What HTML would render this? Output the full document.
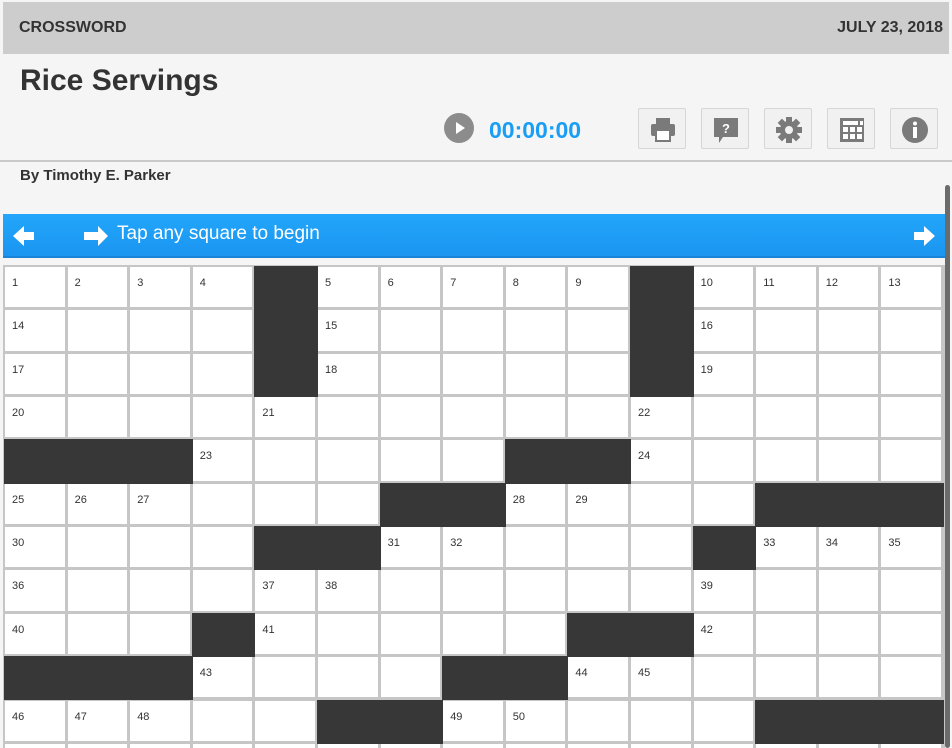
<!DOCTYPE html>
<html><head><meta charset="utf-8"><style>
*{margin:0;padding:0;box-sizing:border-box}
html,body{width:952px;height:748px;overflow:hidden}
body{background:#f5f5f5;font-family:"Liberation Sans",Arial,sans-serif;position:relative}
.hdr{position:absolute;left:3px;top:2px;width:946px;height:52px;background:#cdcdcd;color:#333;font-weight:bold;font-size:16px}
.hdr .l{position:absolute;left:16px;top:17px}
.hdr .r{position:absolute;right:6px;top:17px}
h1{position:absolute;left:20px;top:64px;font-size:30px;color:#333}
.by{position:absolute;left:20px;top:167px;font-size:15px;font-weight:bold;color:#333}
.hr{position:absolute;left:0;top:160px;width:952px;height:2px;background:#c9c9c9}
.play{position:absolute;left:444px;top:113px;width:30px;height:30px;border-radius:50%;background:#8c8c8c}
.play:after{content:"";position:absolute;left:12px;top:9px;border-left:9px solid #fff;border-top:6px solid transparent;border-bottom:6px solid transparent}
.time{position:absolute;left:489px;top:117px;font-size:23px;font-weight:bold;color:#1a9ef5}
.btn{position:absolute;top:108px;width:48px;height:41px;background:#f1f1f1;border:1px solid #d6d6d6;border-radius:2px}
.btn svg{position:absolute;left:9px;top:6px}
.bar{position:absolute;left:3px;top:214px;width:942px;height:44px;background:linear-gradient(#22a6fb,#1b95f0);border-bottom:2px solid #1a85d8}
.bar .t{position:absolute;left:114px;top:9px;color:#fff;font-size:19px}
.sb{position:absolute;left:945px;top:185px;width:5px;height:563px;background:#6b6b6b;border-radius:3px}
.grid{position:absolute;left:3px;top:265px;width:942px;height:483px;background:#c6c6c6;overflow:hidden}
.c{position:absolute;background:#fff;font-size:11px;color:#333}
.c span{position:absolute;left:7px;top:10px}
.b{position:absolute;background:#373737}
</style></head><body>
<div class="hdr"><span class="l">CROSSWORD</span><span class="r">JULY 23, 2018</span></div>
<h1>Rice Servings</h1>
<div class="play"></div><div class="time">00:00:00</div>
<div class="btn" style="left:638px"><svg width="30" height="30" viewBox="0 0 30 30"><rect x="8" y="3" width="14" height="6" fill="#7a7a7a"/><rect x="3" y="9" width="24" height="12" rx="2" fill="#7a7a7a"/><rect x="8" y="15" width="14" height="11" fill="#fff" stroke="#7a7a7a" stroke-width="2"/></svg></div>
<div class="btn" style="left:701px"><svg width="30" height="32" viewBox="0 0 30 32"><path d="M3 3h24v19H12l-4 6v-6H3z" fill="#7a7a7a"/><text x="15" y="18" font-size="13" font-weight="bold" fill="#fff" text-anchor="middle" font-family="Liberation Sans">?</text></svg></div>
<div class="btn" style="left:764px"><svg width="30" height="30" viewBox="0 0 30 30"><g fill="#7a7a7a" transform="translate(15 15)"><circle r="9"/><g id="t"><rect x="-3" y="-13" width="6" height="6"/></g><use href="#t" transform="rotate(45)"/><use href="#t" transform="rotate(90)"/><use href="#t" transform="rotate(135)"/><use href="#t" transform="rotate(180)"/><use href="#t" transform="rotate(225)"/><use href="#t" transform="rotate(270)"/><use href="#t" transform="rotate(315)"/></g><circle cx="15" cy="15" r="4" fill="#f1f1f1"/></svg></div>
<div class="btn" style="left:827px"><svg width="30" height="30" viewBox="0 0 30 30"><rect x="3" y="3" width="24" height="24" fill="#7a7a7a"/><g fill="#fff"><rect x="6" y="6" width="15" height="4"/><rect x="23" y="6" width="3" height="4"/><rect x="6" y="12" width="5" height="5"/><rect x="13" y="12" width="5" height="5"/><rect x="20" y="12" width="5" height="5"/><rect x="6" y="19" width="5" height="5"/><rect x="13" y="19" width="5" height="5"/><rect x="20" y="19" width="5" height="5"/></g></svg></div>
<div class="btn" style="left:890px"><svg width="30" height="30" viewBox="0 0 30 30"><circle cx="15" cy="15" r="13" fill="#7a7a7a"/><circle cx="15" cy="8.5" r="2" fill="#fff"/><rect x="13" y="12" width="4" height="11" fill="#fff"/></svg></div>
<div class="hr"></div>
<div class="by">By Timothy E. Parker</div>
<div class="bar">
<svg style="position:absolute;left:9px;top:10px" width="24" height="24" viewBox="0 0 24 24"><path d="M1 12L12 2v6h10v8H12v6z" fill="#fff"/></svg>
<svg style="position:absolute;left:80px;top:10px" width="26" height="24" viewBox="0 0 26 24"><path d="M25 12L15 2v6H1v8h14v6z" fill="#fff"/></svg>
<span class="t">Tap any square to begin</span>
<svg style="position:absolute;left:909px;top:10px" width="24" height="24" viewBox="0 0 24 24"><path d="M23 12L12 2v6H2v8h10v6z" fill="#fff"/></svg>
</div>
<div class="grid" id="g"></div>
<div class="sb"></div>
<script>
var B={0:[4,10],1:[4,10],2:[4,10],3:[],4:[0,1,2,8,9],5:[6,7,12,13,14],6:[4,5,11],7:[],8:[3,9,10],9:[0,1,2,7,8],10:[5,6,12,13,14],11:[]};
var g=document.getElementById('g'),h='',n=1,W=62.6,H=43.35;
function blk(r,c){if(r<0||c<0||c>14)return true;return B[r]&&B[r].indexOf(c)>=0;}
for(var r=0;r<12;r++)for(var c=0;c<15;c++){
var x=1+c*W,y=1+r*H;
if(blk(r,c)){h+='<div class="b" style="left:'+x+'px;top:'+y+'px;width:'+(W+1)+'px;height:'+(H+1)+'px"></div>';continue;}
var num='';
if(r<11&&((blk(r,c-1)&&!blk(r,c+1))||(r==0||blk(r-1,c)))){num='<span>'+n+'</span>';n++;}
h+='<div class="c" style="left:'+(x+1)+'px;top:'+(y+1)+'px;width:'+(W-3)+'px;height:'+(H-3)+'px">'+num+'</div>';
}
g.innerHTML=h;
</script>
</body></html>
